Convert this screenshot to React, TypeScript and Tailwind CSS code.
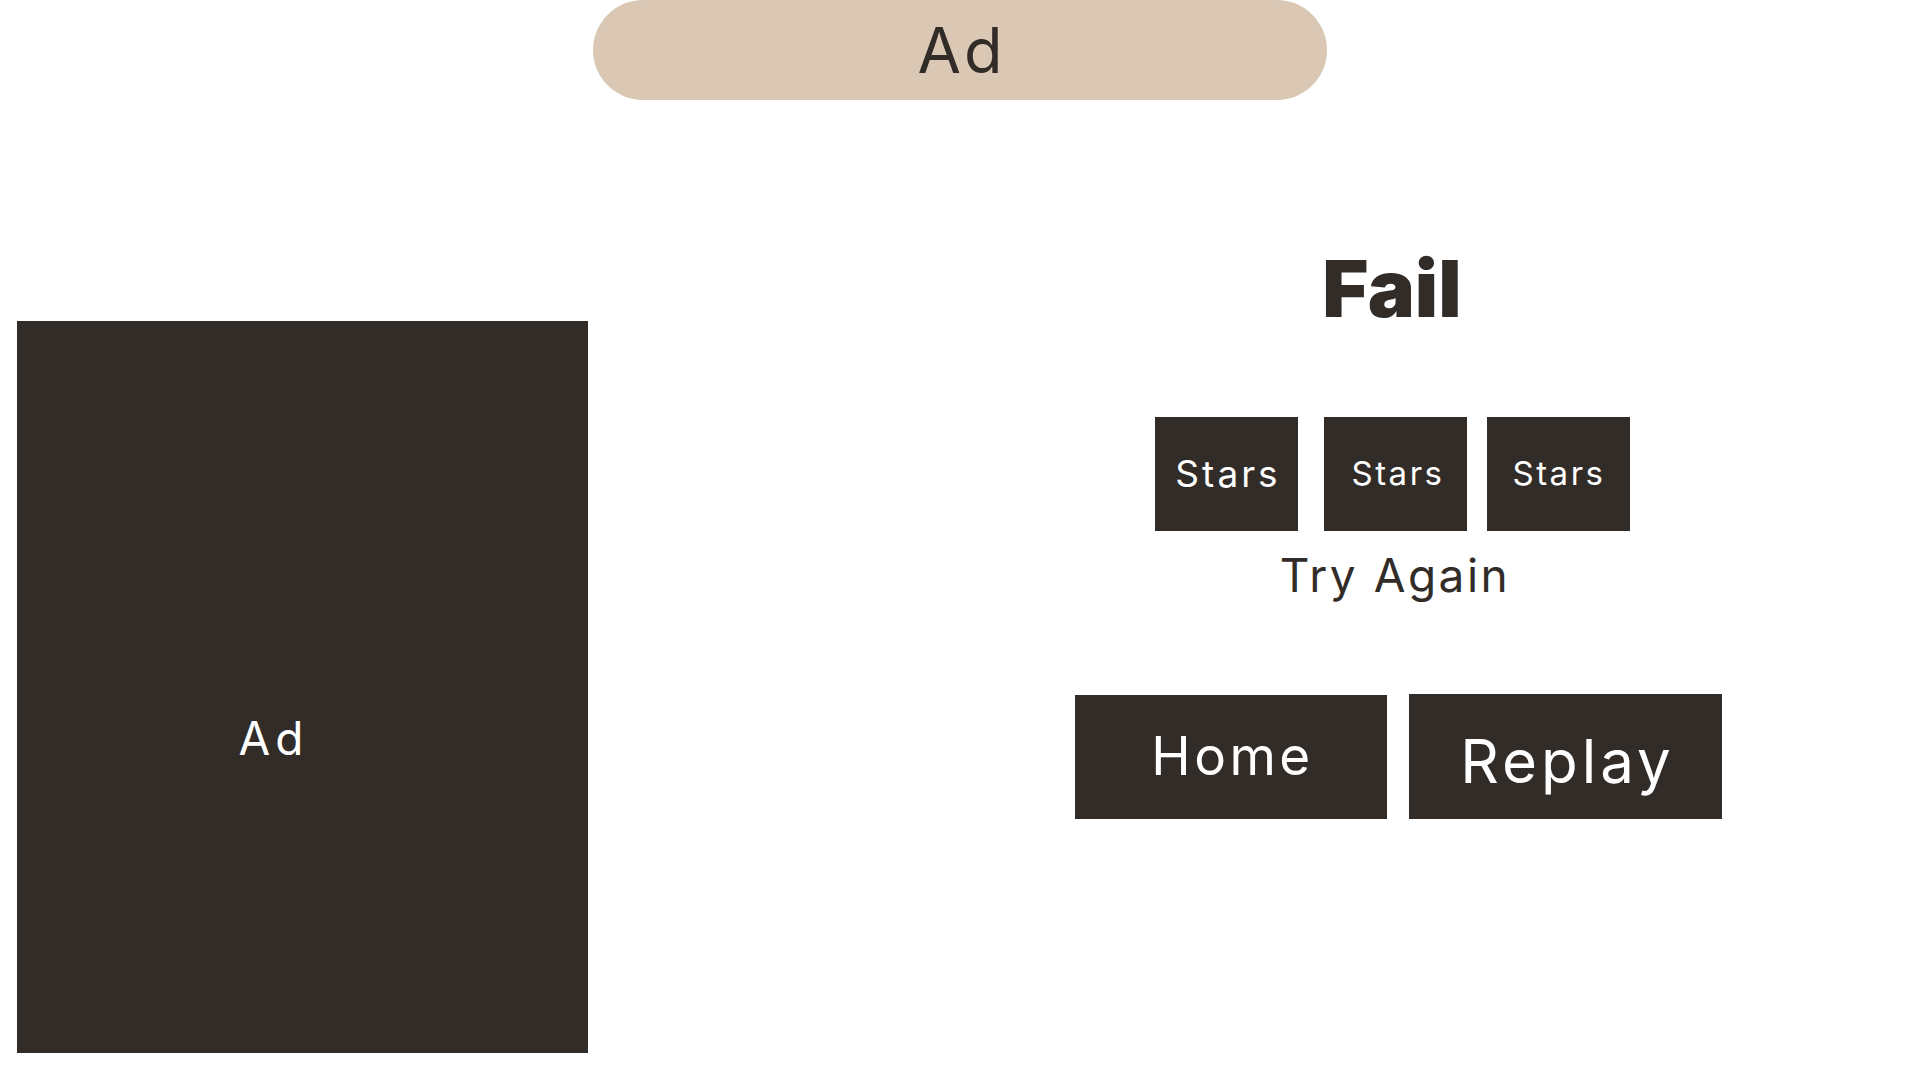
import React from "react";

const font = { fontFamily: "Inter, 'Open Sans', sans-serif" };

export default function App() {
  return (
    <div className="w-full h-[1080px] bg-white text-[#322c29] overflow-hidden" style={font}>
      <div className="mx-auto w-[734px] h-[100px] rounded-full bg-[#dbc8b4] flex items-center justify-center">
        <span className="text-[63px] leading-none font-normal tracking-[3px] ml-[3px]">Ad</span>
      </div>
      <div className="flex items-start">
        <div className="ml-[17px] mt-[221px] w-[571px] h-[732px] bg-[#322c29] flex items-center justify-center">
          <span className="text-white text-[46px] leading-none tracking-[5px] mt-[102px] mr-[58px]">Ad</span>
        </div>
        <div className="ml-[474px] w-[660px] flex flex-col items-center">
          <div className="mt-[149px] text-[79px] font-black leading-none">Fail</div>
          <div className="mt-[89px] flex">
            <div className="w-[143px] h-[114px] bg-[#322c29] text-white flex items-center justify-center text-[37px] tracking-[3px] pl-[4px]">Stars</div>
            <div className="ml-[26px] w-[143px] h-[114px] bg-[#322c29] text-white flex items-center justify-center text-[33px] tracking-[2.5px] pl-[6px]">Stars</div>
            <div className="ml-[20px] w-[143px] h-[114px] bg-[#322c29] text-white flex items-center justify-center text-[33px] tracking-[2.5px] pl-[2px]">Stars</div>
          </div>
          <div className="mt-[21px] text-[46px] leading-none tracking-[2.5px] ml-[6px]">Try Again</div>
          <div className="mt-[96px] ml-[13px] flex items-start gap-[22px]">
            <div className="w-[312px] h-[124px] mt-[1px] bg-[#322c29] text-white flex items-center justify-center text-[53px] tracking-[3.5px] pl-[3px]">Home</div>
            <div className="w-[313px] h-[125px] bg-[#322c29] text-white flex items-center justify-center text-[60px] tracking-[4px] pt-[8px] pl-[4px]">Replay</div>
          </div>
        </div>
      </div>
    </div>
  );
}
